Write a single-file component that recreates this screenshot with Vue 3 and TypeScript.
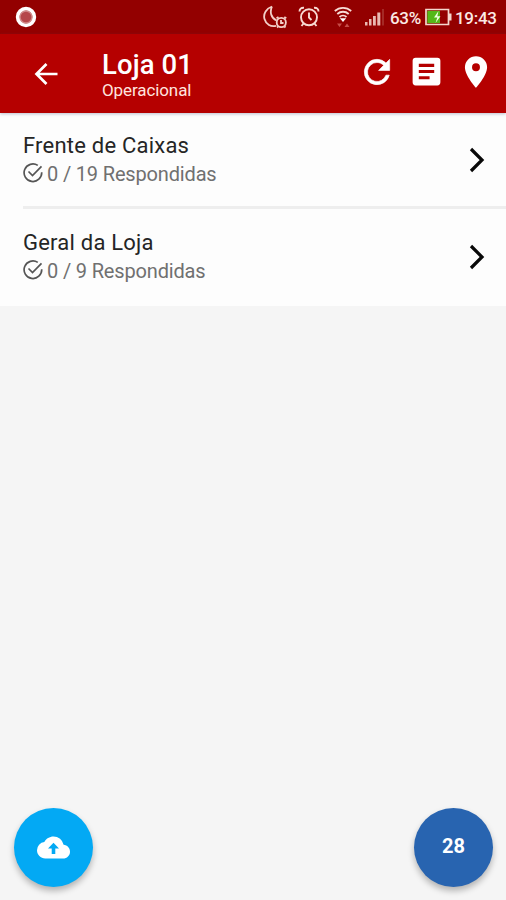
<script setup lang="ts">
interface Section {
  title: string
  answered: number
  total: number
}

const sections: Section[] = [
  { title: 'Frente de Caixas', answered: 0, total: 19 },
  { title: 'Geral da Loja', answered: 0, total: 9 },
]
const pending: number = sections.reduce((sum, s) => sum + s.total - s.answered, 0)
</script>

<template>
  <div class="screen">
    <div class="status">
      <svg class="record" width="22" height="22" viewBox="0 0 22 22">
        <circle cx="11" cy="11" r="8.300" fill="#b5474a" stroke="#fff" stroke-width="3.800" />
        <circle cx="11" cy="11" r="6" fill="none" stroke="#d08a8a" stroke-width="1.300" />
      </svg>
      <div class="tray">
        <svg class="moon" width="25" height="24" viewBox="0 0 25 24" fill="none" stroke="#f3cfc8" stroke-width="1.800">
          <path d="M9 1.500C3.500 3.500 0 8.500 1.500 14C3 19.500 8 22 13 20.800M9 1.500C6.500 7 8 13 13.500 15.500" />
          <circle cx="18.300" cy="17.500" r="4.600" />
          <path d="M18 15v3h2.500M13.500 13.300l2-1.300M21.300 12l2 1.300M15 21.500l-1 1M21.500 21.500l1 1" />
        </svg>
        <svg class="alarm" width="22" height="22" viewBox="0 0 22 22" fill="none" stroke="#f8d9d2" stroke-width="1.900">
          <circle cx="11" cy="11.300" r="8" />
          <path d="M11 6.500v5l2.500 2.500M1.500 5.500C1.500 3 3 1.500 6 1.700M20.500 5.500C20.500 3 19 1.500 16 1.700M5.500 17.500L3.500 20M16.500 17.500l2 2.500" />
        </svg>
        <svg class="wifi" width="18" height="22" viewBox="0 0 18 22" fill="none" stroke="#f8dcd6" stroke-width="1.800">
          <path d="M.8 5C5.500 .8 12.500 .8 17.200 5M3.300 8C6.600 5 11.400 5 14.700 8M5.500 11c2-1.800 5-1.800 7 0" />
          <path d="M5.800 12.300h6.400L9 16z" fill="#fff" stroke="none" />
          <path d="M3 17.500h5L5.500 21zM10.500 21h5L13 17.500z" fill="#c64d48" stroke="none" />
        </svg>
        <svg class="signal" width="20" height="18" viewBox="0 0 20 18" fill="#e9b8b1">
          <path d="M0 14h2.500v3.500H0zM4 11h2.500v6.500H4zM8 8h2.800v9.500H8zM12.300 4.500h3v13h-3z" />
          <path d="M17.500 1h1v16.500h-1z" fill="#b8524b" />
        </svg>
        <span class="percent">63%</span>
        <svg class="battery" width="27" height="18" viewBox="0 0 27 18">
          <path d="M1 1.500h22.500v15H1z" fill="#930000" stroke="#f4d7ce" stroke-width="1.700" />
          <path d="M24 5.500h2.500v7H24z" fill="#f4d7ce" />
          <path d="M2.300 2.800h12.700v12.400H2.300z" fill="#55b818" />
          <path d="M13.500 3L9 9.500h3.300L10.500 15l5-6.800h-3.200z" fill="#f1ffe1" />
        </svg>
        <span class="clock">19:43</span>
      </div>
    </div>

    <header class="bar">
      <svg class="back" width="24" height="24" viewBox="0 0 24 24" fill="none" stroke="#fff" stroke-width="2.700">
        <path d="M23.500 12H3M12.500 2L2.500 12l10 10" />
      </svg>
      <div class="heading">
        <h1>Loja 01</h1>
        <p>Operacional</p>
      </div>
      <div class="actions">
        <svg width="38" height="38" viewBox="0 0 24 24" fill="#fff" stroke="#fff" stroke-width="0.400">
          <path d="M17.650 6.350A7.960 7.960 0 0 0 12 4a8 8 0 1 0 7.730 10h-2.080A6 6 0 1 1 12 6c1.660 0 3.140.69 4.220 1.780L13 11h7V4z" />
        </svg>
        <svg width="37" height="37" viewBox="0 0 24 24" fill="#fff">
          <path d="M19 3H5a2 2 0 0 0-2 2v14a2 2 0 0 0 2 2h14a2 2 0 0 0 2-2V5a2 2 0 0 0-2-2zm-5 14H7v-2h7zm3-4H7v-2h10zm0-4H7V7h10z" />
        </svg>
        <svg width="38" height="38" viewBox="0 0 24 24" fill="#fff">
          <path d="M12 2a7 7 0 0 0-7 7c0 5.250 7 13 7 13s7-7.750 7-13a7 7 0 0 0-7-7zm0 9.500a2.500 2.500 0 1 1 0-5 2.500 2.500 0 0 1 0 5z" />
        </svg>
      </div>
    </header>

    <main class="list">
      <div v-for="section in sections" :key="section.title" class="row">
        <div class="info">
          <div class="title">{{ section.title }}</div>
          <div class="progress">
            <svg width="20" height="20" viewBox="0 0 20 20" fill="none" stroke="#555" stroke-width="1.700">
              <path d="M14.800 2.400A8.800 8.800 0 1 0 18.700 9.200M5.500 8.500l4 4L18.500 3.300" />
            </svg>
            <span>{{ section.answered }} / {{ section.total }} Respondidas</span>
          </div>
        </div>
        <svg class="chevron" width="16" height="26" viewBox="0 0 16 26" fill="none" stroke="#080808" stroke-width="3.200">
          <path d="M2 2l11 11L2 24" />
        </svg>
      </div>
    </main>

    <footer class="floating">
      <button class="fab upload" aria-label="Enviar">
        <svg width="33" height="33" viewBox="0 0 24 24" fill="#fff">
          <path d="M19.350 10.040A7.490 7.490 0 0 0 12 4C9.110 4 6.600 5.640 5.350 8.040A5.994 5.994 0 0 0 0 14c0 3.310 2.690 6 6 6h13c2.760 0 5-2.240 5-5 0-2.640-2.050-4.780-4.650-4.960zM13.300 12.700v4h-2.600v-4H8l4-4.200 4 4.200z" />
        </svg>
      </button>
      <button class="fab count">{{ pending }}</button>
    </footer>
  </div>
</template>

<style>
body {
  margin: 0;
}
</style>

<style scoped>
.screen {
  width: 506px;
  height: 900px;
  display: flex;
  flex-direction: column;
  overflow: hidden;
  background: #f5f5f5;
  font-family: Roboto, "Liberation Sans", sans-serif;
}
.screen svg {
  display: block;
  flex: none;
}
.status {
  height: 34px;
  flex: none;
  display: flex;
  align-items: center;
  justify-content: space-between;
  padding: 0 10px 0 15px;
  background: #930000;
  color: #fbe9e5;
}
.tray {
  display: flex;
  align-items: center;
  height: 34px;
}
.moon {
  margin-right: 10px;
}
.alarm {
  margin-right: 14px;
}
.wifi {
  margin-right: 13px;
}
.signal {
  margin-right: 5px;
}
.percent,
.clock {
  font-size: 17px;
  font-weight: 500;
  line-height: 34px;
  padding-top: 2px;
  white-space: nowrap;
}
.percent {
  width: 35px;
  letter-spacing: -0.300px;
}
.clock {
  width: 41px;
  margin-left: 3px;
  letter-spacing: -0.300px;
}
.bar {
  height: 79px;
  flex: none;
  box-sizing: border-box;
  display: flex;
  align-items: center;
  padding: 0 11px 0 34px;
  background: #b50000;
  color: #fff;
  box-shadow: 0 1px 3px rgba(70, 80, 120, 0.350);
  z-index: 1;
}
.heading {
  flex: 1;
  margin-left: 44px;
  padding-top: 3px;
}
h1,
p {
  margin: 0;
  white-space: nowrap;
}
h1 {
  font-size: 27.500px;
  line-height: 30px;
  font-weight: 500;
  letter-spacing: 0.100px;
}
p {
  font-size: 17px;
  line-height: 21px;
  letter-spacing: -0.100px;
  color: #ffe4df;
}
.actions {
  display: flex;
  align-items: center;
  gap: 12px;
  margin-top: -4px;
}
.list {
  background: #fdfdfd;
}
.row {
  height: 97px;
  box-sizing: border-box;
  display: flex;
  justify-content: space-between;
  padding: 19px 21px 0 0;
  margin-left: 23px;
}
.row:first-child {
  height: 96px;
  border-bottom: 3px solid #eeeeee;
}
.row:last-child {
  padding-top: 20px;
}
.title {
  font-size: 22px;
  line-height: 28px;
  letter-spacing: 0.220px;
  color: #252525;
}
.progress {
  display: flex;
  align-items: center;
  gap: 4px;
  font-size: 20px;
  line-height: 28px;
  letter-spacing: -0.160px;
  color: #707070;
}
.progress svg {
  margin-top: -3px;
}
.chevron {
  margin-top: 15px;
}
.floating {
  display: flex;
  justify-content: space-between;
  margin-top: auto;
  padding: 0 13px 13px 14px;
}
.fab {
  width: 79px;
  height: 79px;
  border: 0;
  padding: 0;
  border-radius: 50%;
  display: grid;
  place-items: center;
  box-shadow: 0 4px 6px rgba(0, 0, 0, 0.270);
  color: #fff;
  font: 700 20px/24px Roboto, "Liberation Sans", sans-serif;
}
.upload {
  background: #03a9f4;
}
.count {
  padding-bottom: 3px;
  background: #2864b0;
}
</style>
